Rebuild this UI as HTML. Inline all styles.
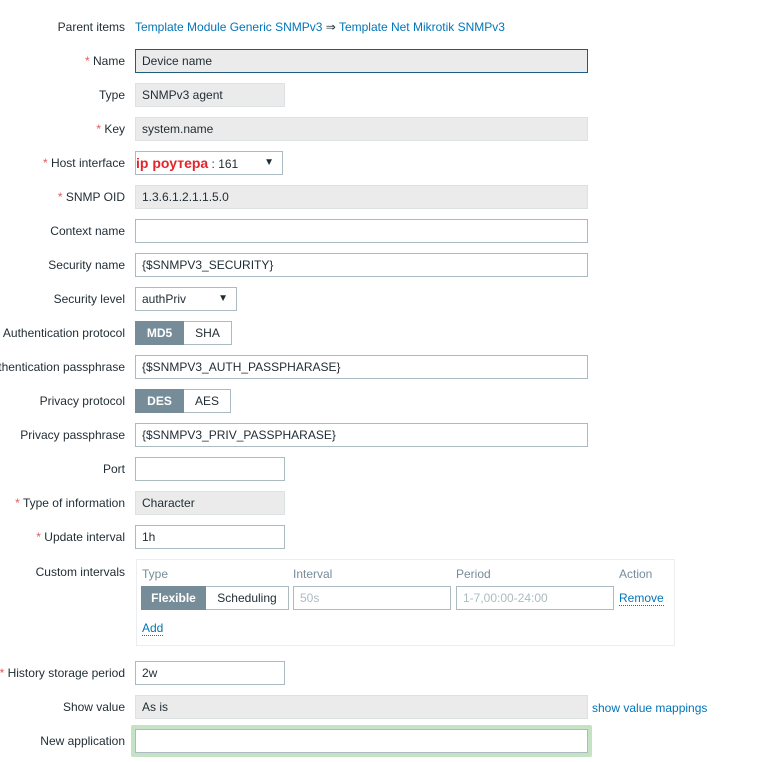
<!DOCTYPE html>
<html><head><meta charset="utf-8"><style>
body{margin:0;width:776px;height:762px;background:#fff;font-family:"Liberation Sans",Arial,sans-serif;font-size:12px;color:#1f2c33;position:relative;overflow:hidden}
#w{position:absolute;left:0;top:1px;width:776px;height:761px}
.l{position:absolute;right:651px;white-space:nowrap;height:24px;line-height:24px;text-align:right}
.l b{color:#e45959;font-weight:normal}
.i{position:absolute;left:135px;height:24px;box-sizing:border-box;border:1px solid #acbbc2;background:#fff;line-height:22px;padding-left:6px;white-space:nowrap;overflow:hidden}
.ro{background:#ebebeb;border-color:#dce1e4}
.a{color:#0275b8}
.seg{position:absolute;height:24px;display:flex;box-sizing:border-box}
.seg span{box-sizing:border-box;height:24px;line-height:22px;border:1px solid #acbbc2;background:#fff;text-align:center}
.seg span.on{background:#768d99;border-color:#768d99;color:#fff;font-weight:bold}
.arr{position:absolute;right:8px;top:0;font-size:10px}
.h{position:absolute;color:#768d99;top:566px}
</style></head><body><div id="w">
<div class="l" style="top:14px">Parent items</div>
<div style="position:absolute;left:135px;top:19px;white-space:nowrap"><span class="a">Template Module Generic SNMPv3</span> ⇒ <span class="a">Template Net Mikrotik SNMPv3</span></div>

<div class="l" style="top:48px"><b>*</b> Name</div>
<div class="i ro" style="top:48px;width:453px;border-color:#1f5c84">Device name</div>
<div class="l" style="top:82px">Type</div>
<div class="i ro" style="top:82px;width:150px">SNMPv3 agent</div>
<div class="l" style="top:116px"><b>*</b> Key</div>
<div class="i ro" style="top:116px;width:453px">system.name</div>
<div class="l" style="top:150px"><b>*</b> Host interface</div>
<div class="i" style="top:150px;width:148px;padding-left:0"><span style="color:#e3242b;font-weight:bold;font-size:14px">ip роутера</span> : 161<span class="arr">▼</span></div>
<div class="l" style="top:184px"><b>*</b> SNMP OID</div>
<div class="i ro" style="top:184px;width:453px">1.3.6.1.2.1.1.5.0</div>
<div class="l" style="top:218px">Context name</div>
<div class="i" style="top:218px;width:453px"></div>
<div class="l" style="top:252px">Security name</div>
<div class="i" style="top:252px;width:453px">{$SNMPV3_SECURITY}</div>
<div class="l" style="top:286px">Security level</div>
<div class="i" style="top:286px;width:102px">authPriv<span class="arr">▼</span></div>
<div class="l" style="top:320px">Authentication protocol</div>
<div class="seg" style="left:135px;top:320px"><span class="on" style="width:49px">MD5</span><span style="width:48px;border-left:0">SHA</span></div>
<div class="l" style="top:354px">Authentication passphrase</div>
<div class="i" style="top:354px;width:453px">{$SNMPV3_AUTH_PASSPHARASE}</div>
<div class="l" style="top:388px">Privacy protocol</div>
<div class="seg" style="left:135px;top:388px"><span class="on" style="width:49px">DES</span><span style="width:47px;border-left:0">AES</span></div>
<div class="l" style="top:422px">Privacy passphrase</div>
<div class="i" style="top:422px;width:453px">{$SNMPV3_PRIV_PASSPHARASE}</div>
<div class="l" style="top:456px">Port</div>
<div class="i" style="top:456px;width:150px"></div>
<div class="l" style="top:490px"><b>*</b> Type of information</div>
<div class="i ro" style="top:490px;width:150px">Character</div>
<div class="l" style="top:524px"><b>*</b> Update interval</div>
<div class="i" style="top:524px;width:150px">1h</div>
<div class="l" style="top:559px">Custom intervals</div>
<div style="position:absolute;left:136px;top:558px;width:539px;height:87px;box-sizing:border-box;border:1px solid #ebeef0"></div>
<div class="h" style="left:142px">Type</div><div class="h" style="left:293px">Interval</div><div class="h" style="left:456px">Period</div><div class="h" style="left:619px">Action</div>
<div class="seg" style="left:141px;top:585px"><span class="on" style="width:65px">Flexible</span><span style="width:83px;border-left:0">Scheduling</span></div>
<div class="i" style="left:293px;top:585px;width:158px;color:#acbbc2">50s</div>
<div class="i" style="left:456px;top:585px;width:158px;color:#acbbc2">1-7,00:00-24:00</div>
<div class="a" style="position:absolute;left:619px;top:590px;border-bottom:1px dotted #0275b8">Remove</div>
<div class="a" style="position:absolute;left:142px;top:620px;border-bottom:1px dotted #0275b8">Add</div>
<div class="l" style="top:660px"><b>*</b> History storage period</div>
<div class="i" style="top:660px;width:150px">2w</div>
<div class="l" style="top:694px">Show value</div>
<div class="i ro" style="top:694px;width:453px">As is</div>
<div class="a" style="position:absolute;left:592px;top:700px">show value mappings</div>
<div class="l" style="top:728px">New application</div>
<div style="position:absolute;left:131px;top:724px;width:461px;height:32px;box-sizing:border-box;border:4px solid #c5e2c5;border-radius:2px"></div>
<div class="i" style="top:728px;width:453px"></div>
</div></body></html>
